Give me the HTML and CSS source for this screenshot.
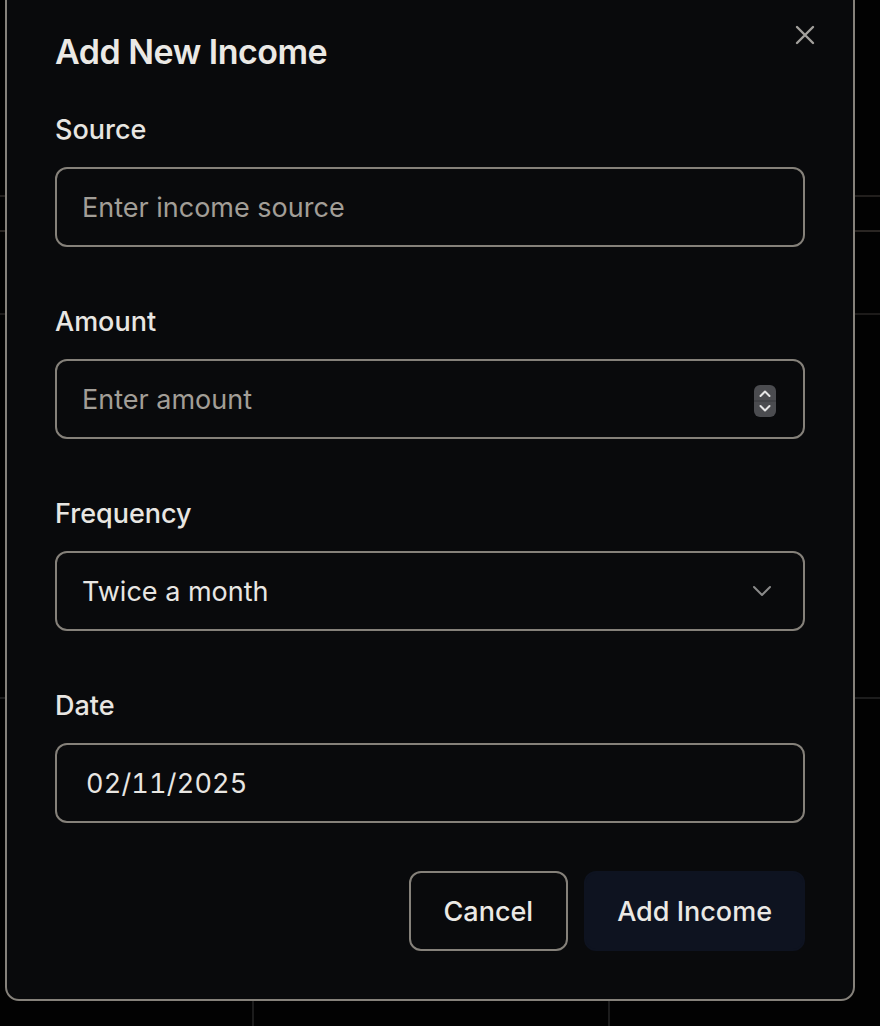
FILE: index.html
```html
<!DOCTYPE html>
<html lang="en">
<head>
<meta charset="utf-8">
<title>Add New Income</title>
<link rel="stylesheet" href="styles.css">
</head>
<body>
<div class="backdrop">
  <div class="bg-spacer"></div>
  <div class="bg-row bg-row-1"></div>
  <div class="bg-row bg-row-2"></div>
  <div class="bg-row bg-row-3"></div>
  <div class="bg-cols">
    <div class="bg-col bg-col-1"></div>
    <div class="bg-col bg-col-2"></div>
    <div class="bg-col bg-col-3"></div>
  </div>
</div>

<div class="overlay">
  <div class="dialog" role="dialog" aria-labelledby="dlg-title">
    <h2 class="dialog-title" id="dlg-title">Add New Income</h2>
    <button class="close-btn" type="button" aria-label="Close">
      <svg width="20" height="20" viewBox="0 0 20 20" fill="none" stroke="currentColor" stroke-width="2.4" stroke-linecap="round"><path d="M2 2 L18 18 M18 2 L2 18"/></svg>
    </button>

    <form class="form">
      <div class="fields">
        <div class="field">
          <label class="label" for="source">Source</label>
          <input class="input" id="source" type="text" placeholder="Enter income source">
        </div>
        <div class="field">
          <label class="label" for="amount">Amount</label>
          <div class="input-wrap">
            <input class="input" id="amount" type="text" placeholder="Enter amount">
            <span class="spinner" aria-hidden="true">
              <svg width="22" height="32" viewBox="0 0 22 32">
                <rect x="0" y="0" width="22" height="32" rx="6" fill="#4b4c50"/>
                <rect x="0" y="15.5" width="22" height="1" fill="#38393c"/>
                <path d="M6.5 11 L11 6.5 L15.5 11" fill="none" stroke="#e6e6e6" stroke-width="2" stroke-linecap="round" stroke-linejoin="round"/>
                <path d="M6.5 21 L11 25.5 L15.5 21" fill="none" stroke="#e6e6e6" stroke-width="2" stroke-linecap="round" stroke-linejoin="round"/>
              </svg>
            </span>
          </div>
        </div>
        <div class="field">
          <label class="label">Frequency</label>
          <div class="input select" role="combobox" aria-expanded="false">
            <span>Twice a month</span>
            <svg class="chev" width="20" height="12" viewBox="0 0 20 12" fill="none" stroke="#8a8a8a" stroke-width="2" stroke-linecap="round" stroke-linejoin="round"><path d="M2 2 L10 10 L18 2"/></svg>
          </div>
        </div>
        <div class="field">
          <label class="label" for="date">Date</label>
          <input class="input date" id="date" type="text" value="02/11/2025">
        </div>
      </div>
      <div class="actions">
        <button class="btn btn-outline" type="button">Cancel</button>
        <button class="btn btn-primary" type="submit">Add Income</button>
      </div>
    </form>
  </div>
</div>
</body>
</html>
```

FILE: styles.css
```css
* { box-sizing: border-box; }

html, body {
  margin: 0;
  padding: 0;
  background: #020202;
  width: 880px;
  height: 1026px;
  overflow: hidden;
  font-family: Inter, "Liberation Sans", sans-serif;
}

/* underlying page */
.backdrop {
  display: flex;
  flex-direction: column;
  height: 1026px;
}
.bg-spacer { height: 195px; flex: none; }
.bg-row { border-top: 2px solid #221f1d; flex: none; }
.bg-row-1 { height: 35px; }
.bg-row-2 { height: 83px; border-top-color: #2a2623; }
.bg-row-3 { height: 384px; border-top-color: #1d1b1a; }
.bg-cols {
  flex: 1;
  display: grid;
  grid-template-columns: 252px 356px 1fr;
  border-top: 2px solid #1d1d1d;
}
.bg-col-2, .bg-col-3 { border-left: 2px solid #1c1c1c; }

/* dialog */
.overlay {
  position: fixed;
  inset: 0;
}
.dialog {
  position: absolute;
  left: 5px;
  top: -15px;
  width: 850px;
  background: #090a0c;
  border: 2px solid #85817a;
  border-radius: 14px;
  padding: 48px;
  display: flex;
  flex-direction: column;
  color: #e9e7e3;
}

.dialog-title {
  margin: 0;
  font-size: 34px;
  line-height: 34px;
  font-weight: 600;
  letter-spacing: -0.5px;
  color: #ebe9e5;
}

.close-btn {
  position: absolute;
  top: 38px;
  right: 38px;
  width: 20px;
  height: 20px;
  padding: 0;
  border: 0;
  background: transparent;
  color: #a3a19d;
  display: flex;
}

.form {
  display: flex;
  flex-direction: column;
  margin-top: 47px;
}
.fields {
  display: flex;
  flex-direction: column;
  gap: 61px;
}
.field {
  display: flex;
  flex-direction: column;
  gap: 24px;
}
.label {
  font-size: 27px;
  line-height: 27px;
  font-weight: 500;
  color: #e8e6e2;
}

.input {
  width: 100%;
  height: 80px;
  border: 2px solid #85817a;
  border-radius: 12px;
  background: transparent;
  padding: 0 25px;
  font-family: inherit;
  font-size: 27px;
  color: #e8e6e2;
  outline: none;
}
.input::placeholder { color: #a29e97; opacity: 1; }

.input-wrap { position: relative; }
.spinner {
  position: absolute;
  right: 29px;
  top: 26px;
  width: 22px;
  height: 32px;
  display: flex;
}

.select {
  display: flex;
  align-items: center;
  justify-content: space-between;
  padding-right: 31px;
}
.chev { flex: none; }

.date {
  padding-left: 29px;
  font-variant-numeric: tabular-nums;
  letter-spacing: 0.2px;
}

.actions {
  display: flex;
  justify-content: flex-end;
  gap: 16px;
  margin-top: 48px;
}
.btn {
  height: 80px;
  padding: 0 33px;
  border-radius: 12px;
  font-family: inherit;
  font-size: 27px;
  font-weight: 500;
  color: #ebe9e5;
  border: 2px solid transparent;
}
.btn-outline {
  background: transparent;
  border-color: #85817a;
}
.btn-primary {
  background: #0e1320;
  border-color: #0e1320;
  padding: 0 31px;
}
```
